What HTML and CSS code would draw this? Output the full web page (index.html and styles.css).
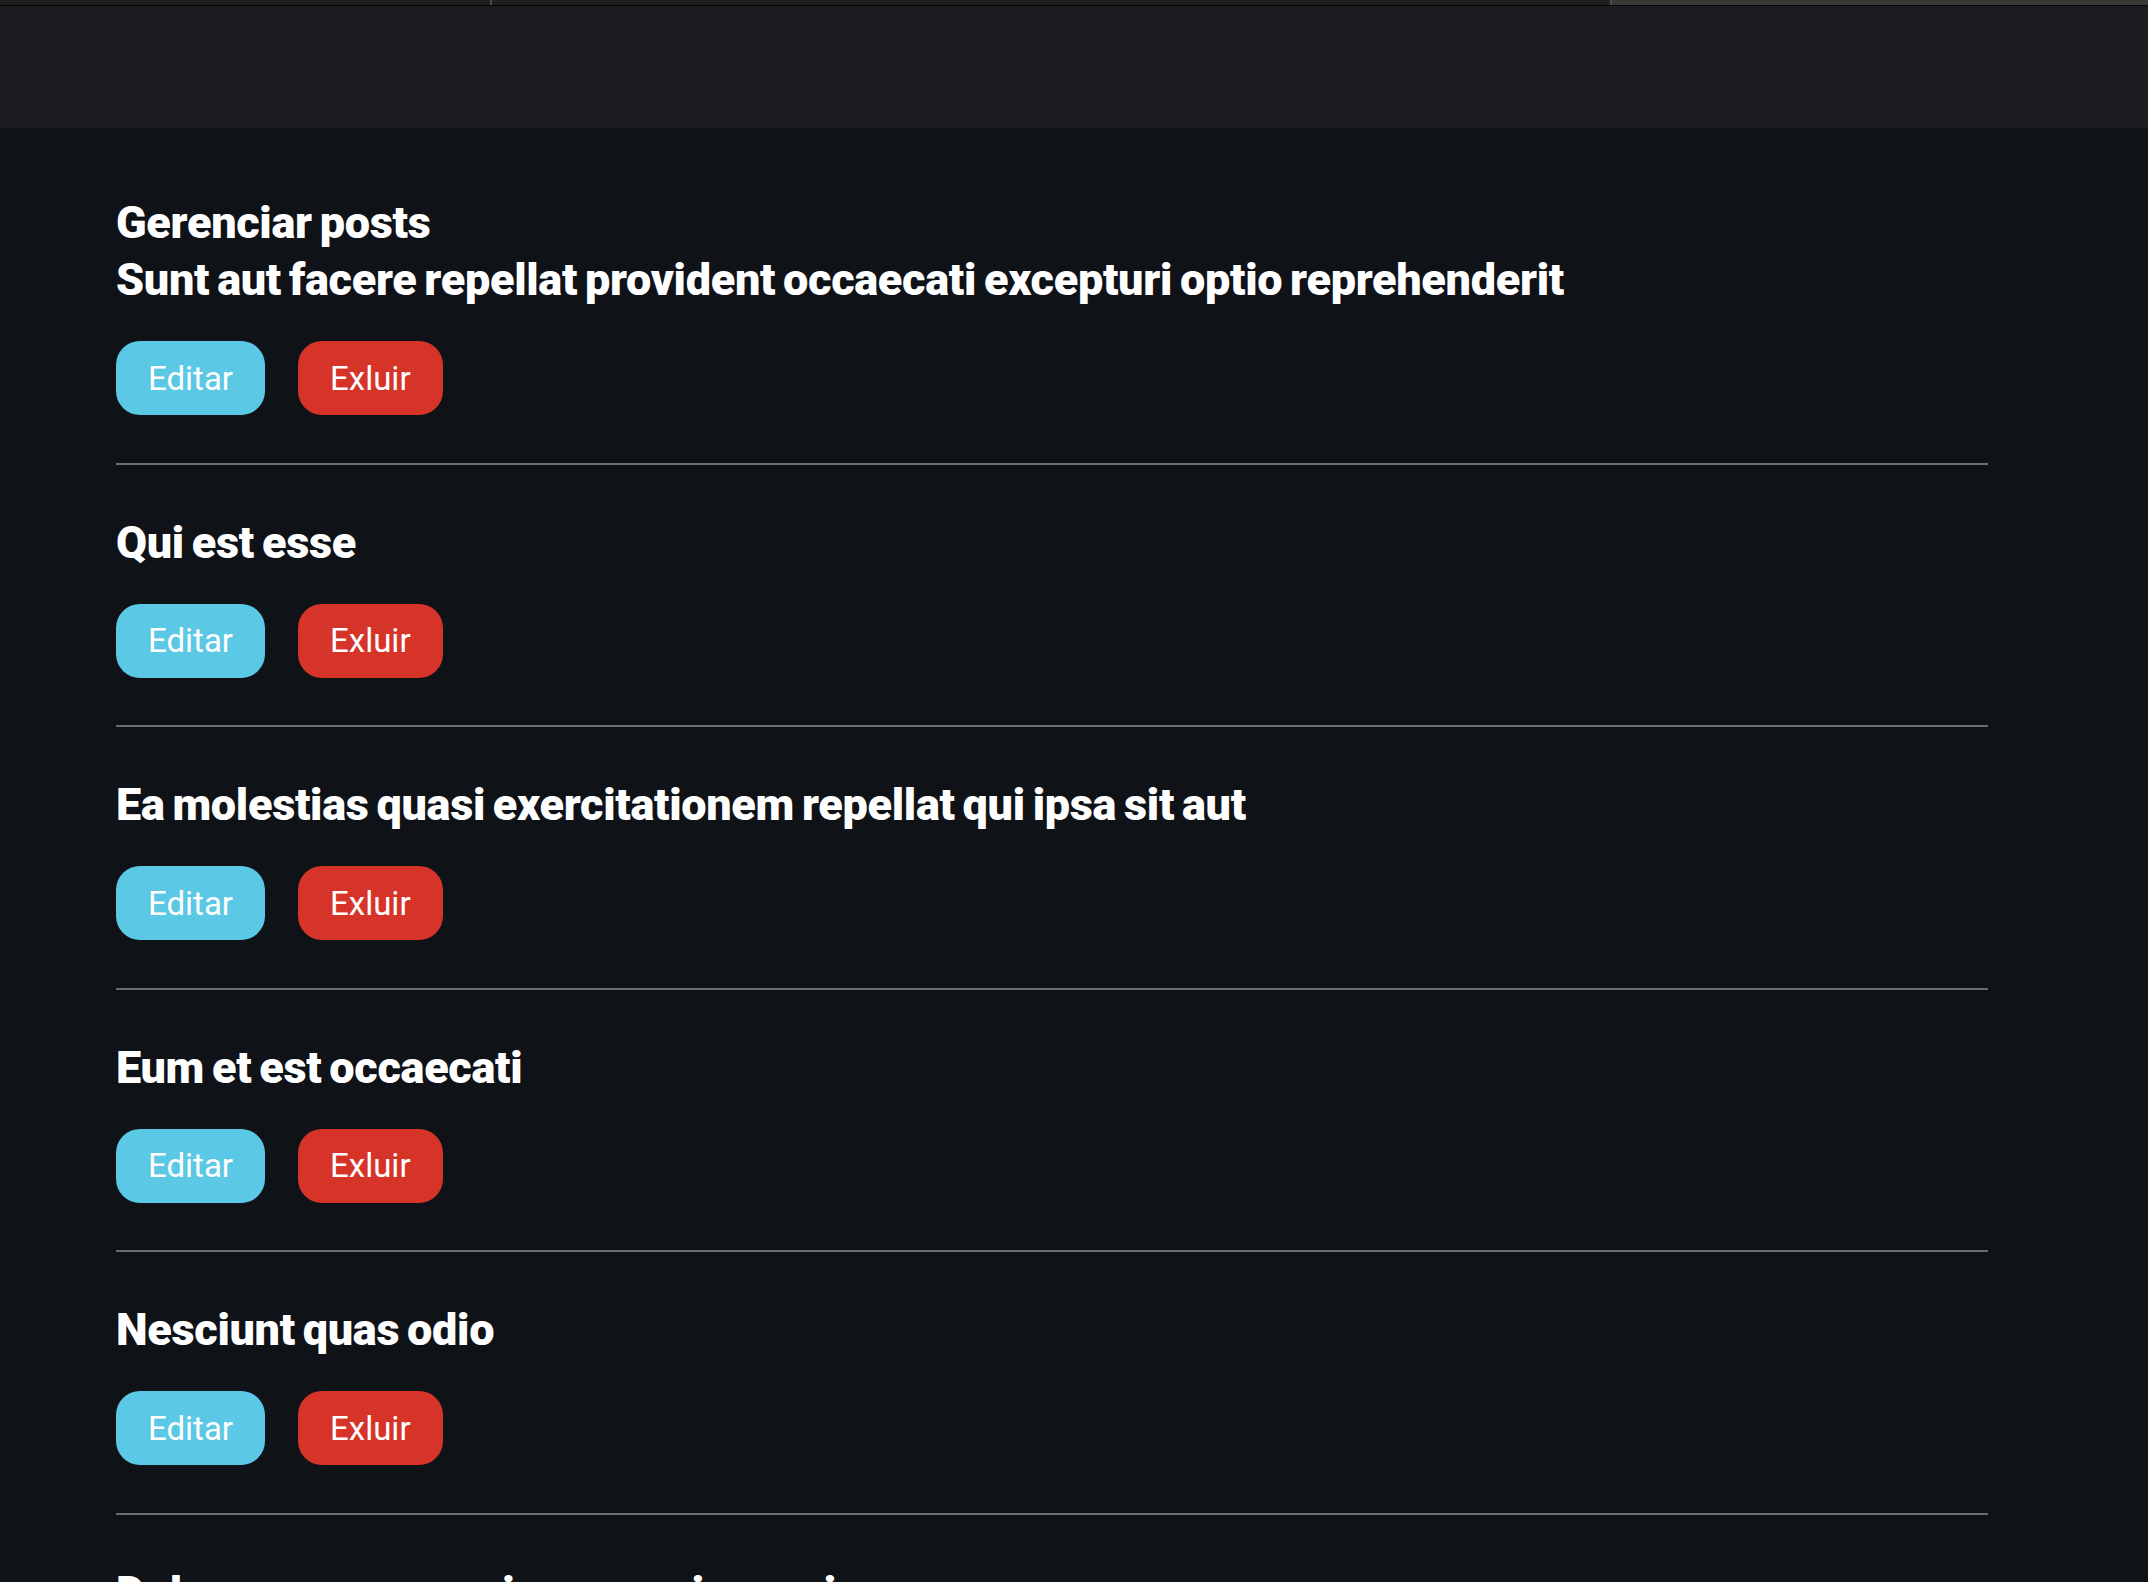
FILE: index.html
```html
<!DOCTYPE html>
<html lang="pt-BR">
<head>
<meta charset="utf-8">
<title>Gerenciar posts</title>
<link rel="stylesheet" href="styles.css">
</head>
<body>
<div class="tabstrip">
  <div class="tab tab-a"></div>
  <div class="tab-sep"></div>
  <div class="tab tab-b"></div>
  <div class="tab-sep"></div>
  <div class="tab tab-c"></div>
</div>
<header class="topbar"></header>
<main class="content">
  <h1 class="page-title">Gerenciar posts</h1>
  <ul class="posts">
    <li class="post">
      <h2 class="post-title">Sunt aut facere repellat provident occaecati excepturi optio reprehenderit</h2>
      <div class="actions"><button class="btn btn-edit">Editar</button><button class="btn btn-delete">Exluir</button></div>
    </li>
    <li class="post">
      <h2 class="post-title">Qui est esse</h2>
      <div class="actions"><button class="btn btn-edit">Editar</button><button class="btn btn-delete">Exluir</button></div>
    </li>
    <li class="post">
      <h2 class="post-title">Ea molestias quasi exercitationem repellat qui ipsa sit aut</h2>
      <div class="actions"><button class="btn btn-edit">Editar</button><button class="btn btn-delete">Exluir</button></div>
    </li>
    <li class="post">
      <h2 class="post-title">Eum et est occaecati</h2>
      <div class="actions"><button class="btn btn-edit">Editar</button><button class="btn btn-delete">Exluir</button></div>
    </li>
    <li class="post">
      <h2 class="post-title">Nesciunt quas odio</h2>
      <div class="actions"><button class="btn btn-edit">Editar</button><button class="btn btn-delete">Exluir</button></div>
    </li>
    <li class="post">
      <h2 class="post-title">Dolorem eum magni eos aperiam quia</h2>
      <div class="actions"><button class="btn btn-edit">Editar</button><button class="btn btn-delete">Exluir</button></div>
    </li>
  </ul>
</main>
</body>
</html>
```
FILE: styles.css
```css
html, body {
  margin: 0;
  padding: 0;
  background: #0f1217;
  font-family: Roboto, "Noto Sans", sans-serif;
  color: #ffffff;
}

.tabstrip {
  display: flex;
  height: 5px;
  border-bottom: 1px solid #050505;
}
.tab-a { width: 490px; background: #1f1f1f; }
.tab-b { width: 1118px; background: #1f1f1f; }
.tab-c { flex: 1; background: #393835; }
.tab-sep { width: 2px; background: #4a4a4a; }

.topbar {
  height: 122px;
  background: #1b1c20;
}

.content {
  padding: 66px 0 0 116px;
  width: 1872px;
}

.page-title,
.post-title {
  margin: 0;
  font-size: 45px;
  line-height: 57px;
  font-weight: 900;
  letter-spacing: -0.3px;
  word-spacing: -3px;
  color: #ffffff;
}

.posts {
  list-style: none;
  margin: 0;
  padding: 0;
}

.post {
  padding: 49px 0 47.5px;
  border-bottom: 2px solid #6e6e6e;
}
.post:first-child {
  padding-top: 0;
}
.post:last-child {
  border-bottom: none;
}

.actions {
  display: flex;
  gap: 33px;
  margin-top: 33px;
}

.btn {
  height: 74px;
  padding: 0 32px;
  border: none;
  border-radius: 24px;
  font-family: Roboto, "Noto Sans", sans-serif;
  font-size: 33px;
  font-weight: 400;
  color: #ffffff;
  cursor: pointer;
}
.btn-edit { background: #5bc8e5; }
.btn-delete { background: #d63428; }
```
